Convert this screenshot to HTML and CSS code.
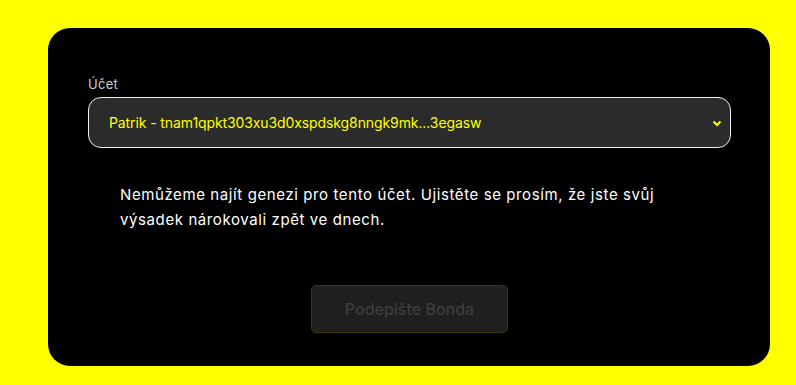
FILE: index.html
```html
<!DOCTYPE html>
<html>
<head>
    <meta charset="UTF-8" />
    <title>Podepište Bonda</title>
    <link rel="stylesheet" href="styles.css">
</head>
<body>

<section class="card">
  <div class="field">
    <label for="account" class="label">Účet</label>
    <div class="select">
      <span class="select-value">Patrik - tnam1qpkt303xu3d0xspdskg8nngk9mk...3egasw</span>
      <svg class="chevron" width="10" height="7" viewBox="0 0 10 7">
        <path d="M1.5 1.5 L5 5 L8.5 1.5" fill="none" stroke="#ffff00" stroke-width="2"/>
      </svg>
    </div>
  </div>

  <p class="message">Nemůžeme najít genezi pro tento účet. Ujistěte se prosím, že jste svůj výsadek nárokovali zpět ve dnech.</p>

  <div class="actions">
    <button class="button" disabled>Podepište Bonda</button>
  </div>
</section>

</body>
</html>
```

FILE: styles.css
```css
* {
  box-sizing: border-box;
}

body {
  margin: 0;
  background: #ffff00;
  font-family: Inter, "DejaVu Sans", sans-serif;
  padding: 28px 26px 19px 48px;
}

/* the black panel */
.card {
  background: #000;
  border-radius: 22px;
  height: 338px;
  padding: 48px 39px 32px 40px;
}

.label {
  display: block;
  color: #cfcfcf;
  font-size: 13px;
  letter-spacing: 0.3px;
  margin-bottom: 5px;
}

.select {
  display: flex;
  align-items: center;
  justify-content: space-between;
  height: 51px;
  border: 1px solid #f0f0f0;
  border-radius: 13px;
  background: #2b2b2b;
  padding: 0 8px 0 20px;
}

.select-value {
  color: #ffff00;
  font-size: 14px;
  letter-spacing: -0.1px;
}

.chevron {
  margin-top: 1px;
}

.message {
  color: #fff;
  font-size: 15px;
  letter-spacing: 0.6px;
  line-height: 25px;
  margin: 34px 0 0 32px;
  max-width: 575px;
}

.actions {
  display: flex;
  justify-content: center;
  margin-top: 53px;
}

.button {
  width: 197px;
  height: 48px;
  background: #1f1f1f;
  border: 1px solid #3b3b00;
  border-radius: 5px;
  color: #3d3d3d;
  font-family: inherit;
  font-size: 16px;
  font-weight: 500;
}
```
